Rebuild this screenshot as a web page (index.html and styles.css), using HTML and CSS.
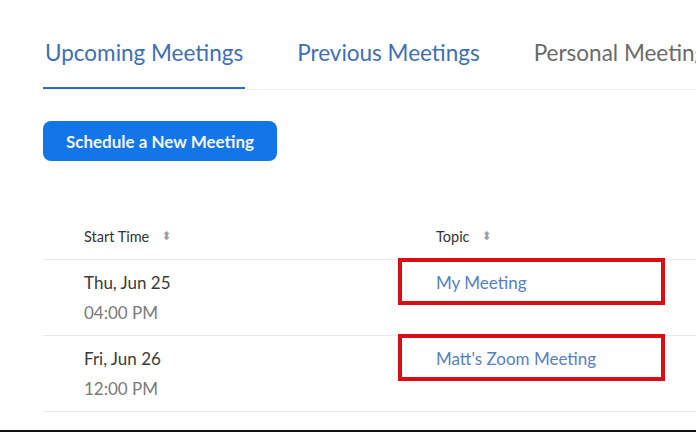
FILE: index.html
```html
<!DOCTYPE html>
<html>
<head>
<meta charset="utf-8">
<link rel="stylesheet" href="styles.css">
</head>
<body>
<div class="page">
  <nav class="tabs">
    <span class="tab active">Upcoming Meetings</span>
    <span class="tab link">Previous Meetings</span>
    <span class="tab muted">Personal Meeting Room</span>
  </nav>
  <div class="actions">
    <button class="btn">Schedule a New Meeting</button>
  </div>
  <div class="table">
    <div class="row head">
      <div class="cell time"><span>Start Time</span><span class="sort">&#11021;</span></div>
      <div class="cell topic"><span>Topic</span><span class="sort">&#11021;</span></div>
    </div>
    <div class="row">
      <div class="cell time">
        <div class="date">Thu, Jun 25</div>
        <div class="hour">04:00 PM</div>
      </div>
      <div class="cell topic">
        <a class="topic-link">My Meeting</a>
        <span class="mark"></span>
      </div>
    </div>
    <div class="row">
      <div class="cell time">
        <div class="date">Fri, Jun 26</div>
        <div class="hour">12:00 PM</div>
      </div>
      <div class="cell topic">
        <a class="topic-link">Matt's Zoom Meeting</a>
        <span class="mark"></span>
      </div>
    </div>
  </div>
</div>
<div class="bottom-rule"></div>
</body>
</html>
```

FILE: styles.css
```css
html, body {
  margin: 0;
  padding: 0;
  background: #fff;
  width: 696px;
  height: 432px;
  overflow: hidden;
  font-family: Lato, "Open Sans", sans-serif;
}
.page {
  padding-left: 43px;
  height: 430px;
  box-sizing: border-box;
  overflow: hidden;
}
.tabs {
  display: flex;
  gap: 50px;
  padding-top: 38px;
  border-bottom: 1px solid #eef0f3;
  white-space: nowrap;
  overflow: hidden;
}
.tab {
  font-size: 22.5px;
  line-height: 30px;
  padding: 0 2px 19px;
  border-bottom: 3px solid transparent;
  margin-bottom: -1px;
  flex-shrink: 0;
}
.tab.active {
  color: #3d6fb6;
  border-bottom-color: #2f6cbf;
}
.tab.link { color: #3d6fb6; }
.tab.muted { color: #6a6a6a; }
.actions {
  padding-top: 31px;
}
.btn {
  width: 234px;
  height: 40px;
  border: none;
  border-radius: 8px;
  background: #1275e8;
  color: #f2f6fc;
  font-family: Lato, sans-serif;
  font-size: 17px;
  font-weight: 700;
  padding: 0;
}
.table {
  margin-top: 62px;
}
.row {
  display: grid;
  grid-template-columns: 355px 1fr;
  border-bottom: 1px solid #e8eaed;
  height: 76px;
  box-sizing: border-box;
  align-items: start;
  padding-top: 8px;
}
.row.head {
  height: 37px;
  padding-top: 3px;
}
.cell {
  position: relative;
}
.cell.time { padding-left: 41px; }
.cell.topic { padding-left: 38px; }
.head .cell {
  font-size: 14.5px;
  color: #333;
  display: flex;
  align-items: center;
  gap: 12px;
  height: 20px;
}
.sort {
  font-size: 12px;
  color: #a0a0a0;
  font-family: "DejaVu Sans", sans-serif;
}
.date {
  font-size: 17px;
  color: #3a3a3a;
  line-height: 30px;
}
.hour {
  font-size: 17px;
  color: #7a7a7a;
  line-height: 30px;
}
.topic-link {
  font-size: 17px;
  color: #5580c6;
  line-height: 30px;
  display: block;
}
.mark {
  position: absolute;
  left: 0;
  top: -10px;
  width: 267px;
  height: 47px;
  border: 4px solid #db0d14;
  box-sizing: border-box;
}
.bottom-rule {
  height: 2px;
  background: #111;
}
```
